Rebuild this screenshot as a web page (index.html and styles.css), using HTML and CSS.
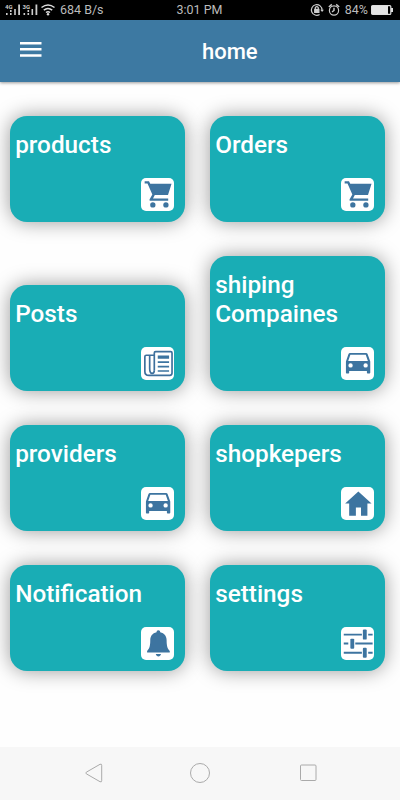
FILE: index.html
```
<!DOCTYPE html>
<html lang="en">
  <head>
    <meta charset="UTF-8" />
    <title>home</title>
    <link rel="stylesheet" href="styles.css">
  </head>
  <body>
    <!-- Shared icons -->
    <svg class="sprite" width="0" height="0">
      <symbol id="cart" viewBox="0 0 34 34">
        <path d="M3.7 3.400h4.400l1.300 2.500H31L27.400 17.300H14l-1.800 3.500h15.400v2.300H9.800c-1.200 0-1.500-1-.9-1.900l2.600-4.500L6.600 5.600H3.700z" />
        <circle cx="12" cy="27.300" r="2.700" />
        <circle cx="25.300" cy="27.300" r="2.700" />
      </symbol>
      <symbol id="car" viewBox="0 0 34 34">
        <path fill-rule="evenodd" d="M9.200 6h16.200c.8 0 1.300.4 1.600 1.200l2.700 7.400v11.200c0 .7-.4 1.100-1 1.100h-1.400c-.6 0-1-.4-1-1.100v-1.500h-18v1.500c0 .7-.4 1.100-1 1.100H6c-.6 0-1-.4-1-1.100V14.600l2.600-7.400C7.900 6.400 8.400 6 9.200 6zM9.500 7.800L7.300 14.200h20L25.100 7.800zM9.700 16.500a2.200 2.200 0 1 0 0 4.400a2.200 2.200 0 1 0 0-4.400zM25 16.500a2.200 2.200 0 1 0 0 4.400a2.200 2.200 0 1 0 0-4.400z" />
      </symbol>
    </svg>

    <!-- Phone status bar -->
    <div class="status">
      <div class="status-left">
        <svg width="51" height="14" viewBox="0 0 51 14">
          <g fill="#ccc">
            <text class="net" x="0" y="5.500">4G</text>
            <path d="M1 10h1.600v2H1zM5 10h1.600v2H5zM5 7h1.600v2H5zM9.200 6h1.600v6H9.200zM13.200 1.500h1.800V12h-1.800z" />
            <text class="net" x="17.500" y="5.500">3G</text>
            <path d="M18.500 10h1.600v2h-1.600zM22.500 7h1.600v2h-1.600zM22.500 10h1.600v2h-1.600zM26.500 6h1.600v6h-1.600zM30.500 1.500h1.800V12h-1.800z" />
          </g>
          <g fill="none" stroke="#ddd" stroke-width="1.500">
            <path d="M36.500 4.500q6.500-5 13 0M38.800 7.100q4.200-3.400 8.400 0M41 9.500q2-1.500 4 0" />
          </g>
          <circle cx="43" cy="11.200" r="1.200" fill="#ddd" />
        </svg>
        <span>684 B/s</span>
      </div>
      <span class="clock">3:01 PM</span>
      <div class="status-right">
        <svg width="32" height="14" viewBox="0 0 32 14" fill="none" stroke="#ccc" stroke-width="1.200">
          <path d="M9.600 11.400A5.300 5.300 0 1 1 12 7" />
          <path d="M10.300 6.800h3.600l-1.800 2.200z" fill="#ccc" stroke="none" />
          <rect x="4.700" y="6.400" width="4.200" height="3" fill="#ccc" />
          <path d="M5.300 6V4.700q1.500-2 3 0V6" />
          <circle cx="24" cy="7.500" r="4.600" />
          <path d="M24 4.800v2.700l-2 1.400M18.800 4l3-2.600M29.200 4l-3-2.600" stroke-width="1.400" />
        </svg>
        <span>84%</span>
        <svg width="23" height="10" viewBox="0 0 23 10">
          <rect x=".6" y=".6" width="19.200" height="8.800" rx="1" fill="none" stroke="#ddd" stroke-width="1.200" />
          <rect x="1" y="1" width="16" height="8" fill="#e4e4e4" />
          <path d="M20 3h2v4h-2z" fill="#ddd" />
        </svg>
      </div>
    </div>

    <header class="appbar">
      <svg class="menu" width="22" height="16" viewBox="0 0 22 16">
        <path d="M0 0h21.500v2.500H0zM0 6.100h21.500v2.500H0zM0 12.300h21.500v2.500H0z" fill="#fff" />
      </svg>
      <h1>home</h1>
    </header>

    <main class="grid">
      <div class="card">
        <h2>products</h2>
        <div class="icon"><svg><use href="#cart" /></svg></div>
      </div>
      <div class="card">
        <h2>Orders</h2>
        <div class="icon"><svg><use href="#cart" /></svg></div>
      </div>
      <div class="card">
        <h2>Posts</h2>
        <div class="icon">
          <svg viewBox="0 0 34 34">
            <g fill="none" stroke="#3d6f9c" stroke-width="1.700">
              <path d="M13.500 23.500V6c0-.8.500-1.300 1.300-1.300h15.400c.8 0 1.300.5 1.300 1.300v20.500c0 1.400-.8 2.300-2.200 2.300H8c-2.500 0-4.100-1.700-4.100-4V10c0-1 .6-1.600 1.500-1.600h7.500" />
              <path d="M8.800 8.400v13.300c0 3 .7 5 2.500 5 1.500 0 2.200-1 2.200-3.200" />
            </g>
            <path d="M17 8.500h11.500V12H17zM17 14.500h11.500v1.700H17zM17 19h11.500v1.700H17zM17 23.500h11.500v1.700H17z" />
          </svg>
        </div>
      </div>
      <div class="card">
        <h2>shiping Compaines</h2>
        <div class="icon"><svg><use href="#car" /></svg></div>
      </div>
      <div class="card">
        <h2>providers</h2>
        <div class="icon"><svg><use href="#car" /></svg></div>
      </div>
      <div class="card">
        <h2>shopkepers</h2>
        <div class="icon">
          <svg viewBox="0 0 34 34">
            <path d="M17.600 4.500L31 16.800h-4.200v12.400h-6.500v-8.400h-5.200v8.400H8.300V16.800H4.200z" />
          </svg>
        </div>
      </div>
      <div class="card">
        <h2>Notification</h2>
        <div class="icon">
          <svg viewBox="0 0 34 34">
            <path d="M17.600 3.300c1.200 0 1.900.8 1.900 2.100 4.300.9 6.500 4.100 6.500 8.100 0 5.400.7 8.500 3.200 10.800v1.600H6.200v-1.600c2.500-2.300 3.200-5.400 3.200-10.800 0-4 2.100-7.200 6.400-8.100 0-1.300.6-2.100 1.800-2.100zM15 27.500h5.300c-.3 1.700-1.300 2.500-2.600 2.500s-2.400-.8-2.700-2.500z" />
          </svg>
        </div>
      </div>
      <div class="card">
        <h2>settings</h2>
        <div class="icon">
          <svg viewBox="0 0 34 34">
            <path d="M2.800 6.800h18.400v1.900H2.800zM27.600 6.800h4.500v1.900h-4.500zM2.800 15.800h4.600v1.900H2.800zM14.500 15.800h17.600v1.900H14.500zM2.800 25.200h18.400v1.900H2.800zM27.600 25.200h4.500v1.900h-4.500z" />
            <rect x="22.200" y="2.500" width="3.900" height="10.300" rx="1" />
            <rect x="9.500" y="11.800" width="3.900" height="10.300" rx="1" />
            <rect x="22.200" y="21" width="3.900" height="10.300" rx="1" />
          </svg>
        </div>
      </div>
    </main>

    <!-- Phone navigation buttons -->
    <nav class="navbar">
      <svg width="18" height="20" viewBox="0 0 18 20"><path d="M1.300 9.200L15 1.300q1.700-.7 1.700 1v15.400q0 1.700-1.700 1L1.300 10.800q-1-.8 0-1.600z" /></svg>
      <svg width="22" height="22" viewBox="0 0 22 22"><circle cx="10" cy="11" r="9.500" /></svg>
      <svg width="18" height="18" viewBox="0 0 18 18"><rect x="1.500" y="1" width="15.500" height="15.500" rx="1" /></svg>
    </nav>
  </body>
</html>
```

FILE: styles.css
```
* {
  box-sizing: border-box;
}
body {
  margin: 0;
  height: 800px;
  display: flex;
  flex-direction: column;
  font-family: Roboto, sans-serif;
  background: #fefefe;
  overflow: hidden;
}
svg {
  display: block;
}
.sprite {
  position: absolute;
}
/* Status bar */
.status {
  height: 20px;
  display: grid;
  grid-template-columns: 1fr auto 1fr;
  align-items: center;
  padding: 0 6px 0 5px;
  background: #000;
  color: #bbb;
  font-size: 12.5px;
  line-height: 20px;
}
.status-left,
.status-right {
  display: flex;
  align-items: center;
  gap: 4px;
}
.status-right {
  justify-content: flex-end;
  gap: 3px;
}
.net {
  font-size: 6px;
  font-weight: bold;
}
/* App bar */
.appbar {
  height: 62px;
  display: flex;
  align-items: center;
  padding-left: 20px;
  background: #3d79a2;
  color: #fff;
  box-shadow: 0 1px 3px rgba(0, 0, 0, 0.4);
}
.appbar .menu {
  margin-bottom: 3px;
}
.appbar h1 {
  margin: 0 0 0 160px;
  font-size: 22px;
  font-weight: 500;
}
/* Cards */
.grid {
  flex: 1;
  display: grid;
  grid-template-columns: 175.5px 175.5px;
  column-gap: 24.5px;
  row-gap: 33.5px;
  align-content: start;
  align-items: end;
  padding: 33.5px 0 0 9.7px;
}
.card {
  display: flex;
  flex-direction: column;
  gap: 19px;
  padding: 14px 11px 11px 5.5px;
  border-radius: 17px;
  background: #19adb5;
  box-shadow: 0 0 20px rgba(0, 0, 0, 0.4);
}
.card h2 {
  margin: 0;
  color: #fff;
  font-size: 24.3px;
  font-weight: 500;
  line-height: 29px;
}
.icon {
  align-self: flex-end;
  width: 33.5px;
  height: 33.5px;
  border-radius: 5px;
  background: #fff;
}
.icon svg {
  width: 100%;
  height: 100%;
  fill: #3d74a0;
}
/* Bottom navigation */
.navbar {
  height: 53px;
  display: flex;
  justify-content: space-between;
  align-items: center;
  padding: 0 83.5px 2px 85px;
  background: #f7f7f7;
}
.navbar svg {
  fill: none;
  stroke: #aaa;
  stroke-width: 1;
}
```
